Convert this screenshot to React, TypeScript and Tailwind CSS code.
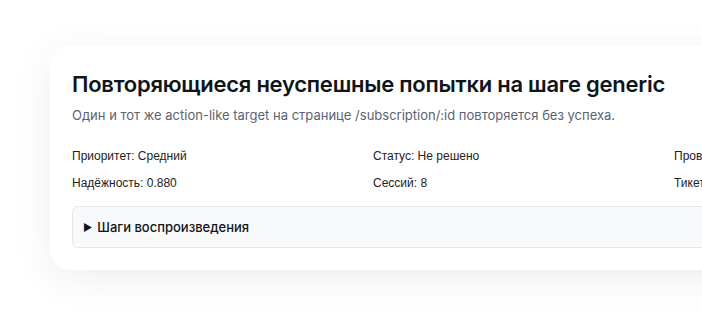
import React from "react";

export default function App() {
  return (
    <div className="w-[702px] h-[324px] overflow-hidden bg-white" style={{ fontFamily: "Inter, 'Noto Sans', sans-serif" }}>
      <div className="pt-[46px] pl-[50px]">
        <div className="w-[900px] rounded-[20px] bg-white shadow-[0_8px_40px_rgba(0,0,0,0.07)] px-[22px] pt-[23px] pb-[22px]">
          <h1 className="text-[22px] leading-[30px] font-semibold text-[#111418] tracking-[-0.25px]">
            Повторяющиеся неуспешные попытки на шаге generic
          </h1>
          <p className="mt-[7px] text-[13px] leading-[18px] text-[#5b6370]">
            Один и тот же action-like target на странице /subscription/:id повторяется без успеха.
          </p>
          <div
            className="mt-[24px] grid grid-cols-[301px_301px_301px] gap-y-[10px] text-[12px] leading-[17px] text-[#222]"
            style={{ fontFamily: "'Liberation Sans', Arial, sans-serif" }}
          >
            <div>Приоритет: <span className="font-medium">Средний</span></div>
            <div>Статус: <span className="font-medium">Не решено</span></div>
            <div>Проверено: нет</div>
            <div>Надёжность: <span className="font-medium">0.880</span></div>
            <div>Сессий: <span className="font-medium">8</span></div>
            <div>Тикет: —</div>
          </div>
          <div className="mt-[14px] rounded-[6px] border border-[#e3e6ea] bg-[#f8f9fb] px-[10px] py-[10px]">
            <div className="text-[13px] leading-[20px] font-medium text-[#111418] flex items-center gap-[5px]">
              <span className="text-[10px]">▶</span>
              <span>Шаги воспроизведения</span>
            </div>
          </div>
        </div>
      </div>
    </div>
  );
}
